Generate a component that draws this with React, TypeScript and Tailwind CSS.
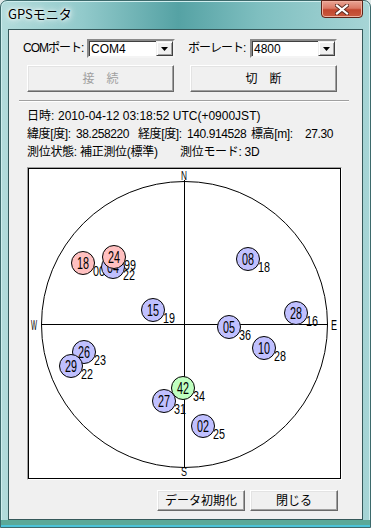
import React from "react";

type Sat = { n: string; cx: number; cy: number; c: string; el: string };

const sats: Sat[] = [
  { n: "18", cx: 83, cy: 263, c: "#ffc0c0", el: "00" },
  { n: "04", cx: 113, cy: 267, c: "#c0c0ff", el: "22" },
  { n: "24", cx: 114, cy: 257, c: "#ffc0c0", el: "99" },
  { n: "08", cx: 248, cy: 259, c: "#c0c0ff", el: "18" },
  { n: "15", cx: 153, cy: 310, c: "#c0c0ff", el: "19" },
  { n: "28", cx: 296, cy: 313, c: "#c0c0ff", el: "16" },
  { n: "05", cx: 229, cy: 327, c: "#c0c0ff", el: "36" },
  { n: "10", cx: 264, cy: 348, c: "#c0c0ff", el: "28" },
  { n: "26", cx: 84, cy: 352, c: "#c0c0ff", el: "23" },
  { n: "29", cx: 71, cy: 366, c: "#c0c0ff", el: "22" },
  { n: "42", cx: 183, cy: 388, c: "#c0ffc0", el: "34" },
  { n: "27", cx: 164, cy: 401, c: "#c0c0ff", el: "31" },
  { n: "02", cx: 203, cy: 426, c: "#c0c0ff", el: "25" },
];

const FONT = "Liberation Sans, Arial, sans-serif";

function Plot() {
  return (
    <svg width={311} height={309} viewBox="29 169 311 309" className="block">
      <rect x={29} y={169} width={311} height={309} fill="#ffffff" />
      <circle cx={184.5} cy={324.5} r={143} fill="none" stroke="#000" strokeWidth={1} />
      <line x1={184.5} y1={169} x2={184.5} y2={468} stroke="#000" strokeWidth={1} />
      <line x1={41} y1={324.5} x2={328} y2={324.5} stroke="#000" strokeWidth={1} />
      <rect x={181} y={169} width={7} height={11} fill="#fff" />
      <text x={181} y={180} fontFamily={FONT} fontSize={13} textLength={6} lengthAdjust="spacingAndGlyphs">N</text>
      <text x={181} y={476} fontFamily={FONT} fontSize={12} textLength={6} lengthAdjust="spacingAndGlyphs">S</text>
      <text x={31} y={330} fontFamily={FONT} fontSize={15} textLength={6} lengthAdjust="spacingAndGlyphs">W</text>
      <text x={331} y={330} fontFamily={FONT} fontSize={15} textLength={6} lengthAdjust="spacingAndGlyphs">E</text>
      {sats.map((s) => (
        <g key={s.n + s.cx}>
          <circle cx={s.cx} cy={s.cy} r={11.5} fill={s.c} stroke="#000" strokeWidth={1} />
          <text
            x={s.cx - 6}
            y={s.cy + 6}
            fontFamily={FONT}
            fontSize={16}
            textLength={12}
            lengthAdjust="spacingAndGlyphs"
          >
            {s.n}
          </text>
          <text
            x={s.cx + 10}
            y={s.cy + 13}
            fontFamily={FONT}
            fontSize={15}
            textLength={12}
            lengthAdjust="spacingAndGlyphs"
          >
            {s.el}
          </text>
        </g>
      ))}
    </svg>
  );
}

function Combo({ value, w }: { value: string; w: string }) {
  return (
    <div
      className={`${w} h-[19px] flex border-2 border-t-[#8a8a8a] border-l-[#8a8a8a] border-r-[#f4f4f4] border-b-[#f4f4f4] bg-white shadow-[inset_1px_1px_0_#404040]`}
    >
      <span className="flex-1 pl-[2px] pt-[1px] text-[12px] leading-[14px] text-black">{value}</span>
      <div className="w-[17px] h-[15px] flex items-center justify-center bg-[#f0f0f0] border border-t-[#f0f0f0] border-l-[#f0f0f0] border-r-[#404040] border-b-[#404040] shadow-[inset_1px_1px_0_#ffffff,inset_-1px_-1px_0_#a0a0a0]">
        <svg width="7" height="4" viewBox="0 0 7 4">
          <path d="M0 0H7L3.5 4Z" fill="#000" />
        </svg>
      </div>
    </div>
  );
}

function Btn({ label, w, h, disabled }: { label: string; w: string; h: string; disabled?: boolean }) {
  return (
    <div
      className={`${w} ${h} flex items-center justify-center whitespace-nowrap bg-[#f0f0f0] border border-t-[#ffffff] border-l-[#ffffff] border-r-[#696969] border-b-[#696969] shadow-[inset_-1px_-1px_0_#a0a0a0,inset_1px_1px_0_#e3e3e3] text-[12px] ${
        disabled ? "text-[#a0a0a0]" : "text-black"
      }`}
    >
      {label}
    </div>
  );
}

export default function App() {
  return (
    <div className="w-[371px] h-[528px] overflow-hidden bg-[#dfe9e9] [font-family:'Liberation_Sans','Noto_Sans_CJK_JP',sans-serif]">
      <div className="w-[371px] h-[528px] flex flex-col rounded-t-[7px] border border-[#3d6a6c] bg-[linear-gradient(90deg,#b3dcdc_0%,#92cacb_22%,#55a2a4_48%,#7fbfc0_70%,#a7d5d6_100%)] shadow-[inset_0_0_0_1px_#cfeeee]">
        {/* title bar */}
        <div className="h-[28px] flex items-start">
          <span className="ml-[7px] mt-[5px] text-[13px] leading-[16px] text-black [font-family:'Noto_Sans_CJK_JP',sans-serif] [text-shadow:0_0_6px_#ffffff,0_0_10px_#ffffff,0_0_3px_#ffffff]">
            GPSモニタ
          </span>
          <div className="ml-auto mr-[7px] mt-[-1px] w-[42px] h-[18px] rounded-b-[4px] border border-[#5e2418] bg-[linear-gradient(180deg,#e9a494_0%,#db7a66_45%,#c2462e_55%,#c85a3e_100%)] shadow-[inset_0_0_0_1px_#f0b0a0] flex items-center justify-center">
            <svg width="14" height="11" viewBox="0 0 14 11">
              <path d="M2 1.5L12 9.5M12 1.5L2 9.5" stroke="#5a2a20" strokeWidth="4" strokeLinecap="square" />
              <path d="M2 1.5L12 9.5M12 1.5L2 9.5" stroke="#ffffff" strokeWidth="2.2" strokeLinecap="square" />
            </svg>
          </div>
        </div>
        {/* client area */}
        <div className="ml-[7px] w-[355px] h-[491px] border border-[#35585a] bg-[#f0f0f0] flex flex-col text-[12px] text-black whitespace-nowrap">
          <div className="mt-[9px] h-[19px] flex items-center">
            <span className="ml-[14px] w-[64px] leading-[19px] tracking-[-1px]">COMポート:</span>
            <Combo value="COM4" w="w-[88px]" />
            <span className="ml-[13px] w-[62px] leading-[19px] tracking-[-1px]">ボーレート:</span>
            <Combo value="4800" w="w-[87px]" />
          </div>
          <div className="mt-[7px] h-[27px] flex">
            <div className="ml-[18px]">
              <Btn label="接　続" w="w-[147px]" h="h-[27px]" disabled />
            </div>
            <div className="ml-[16px]">
              <Btn label="切　断" w="w-[147px]" h="h-[27px]" />
            </div>
          </div>
          <div className="mt-[8px] ml-[10px] w-[330px] h-[2px] border-t border-t-[#a0a0a0] border-b border-b-white" />
          <div className="mt-[5px] ml-[18px] flex flex-col leading-[18px]">
            <div className="flex">
              <span className="w-[31px]">日時:</span>
              <span>2010-04-12 03:18:52 UTC(+0900JST)</span>
            </div>
            <div className="flex">
              <span className="w-[49px] tracking-[-0.4px]">緯度[度]:</span>
              <span className="w-[62px] tracking-[-0.4px]">38.258220</span>
              <span className="w-[49px] tracking-[-0.4px]">経度[度]:</span>
              <span className="w-[64px] tracking-[-0.4px]">140.914528</span>
              <span className="w-[54px] tracking-[-0.4px]">標高[m]:</span>
              <span className="tracking-[-0.4px]">27.30</span>
            </div>
            <div className="flex">
              <span className="w-[53px] tracking-[-0.3px]">測位状態:</span>
              <span className="w-[100px] tracking-[-0.3px]">補正測位(標準)</span>
              <span className="tracking-[-0.3px]">測位モード: 3D</span>
            </div>
          </div>
          <div className="mt-[6px] ml-[18px] w-[315px] h-[313px] border border-t-[#a0a0a0] border-l-[#a0a0a0] border-r-white border-b-white">
            <div className="w-full h-full border border-black">
              <Plot />
            </div>
          </div>
          <div className="mt-[10px] h-[21px] flex">
            <div className="ml-[148px]">
              <Btn label="データ初期化" w="w-[88px]" h="h-[21px]" />
            </div>
            <div className="ml-[5px]">
              <Btn label="閉じる" w="w-[88px]" h="h-[21px]" />
            </div>
          </div>
        </div>
        <div className="flex-1 bg-[#5ba998] border-b-2 border-b-[#4cc3d8]" />
      </div>
    </div>
  );
}
